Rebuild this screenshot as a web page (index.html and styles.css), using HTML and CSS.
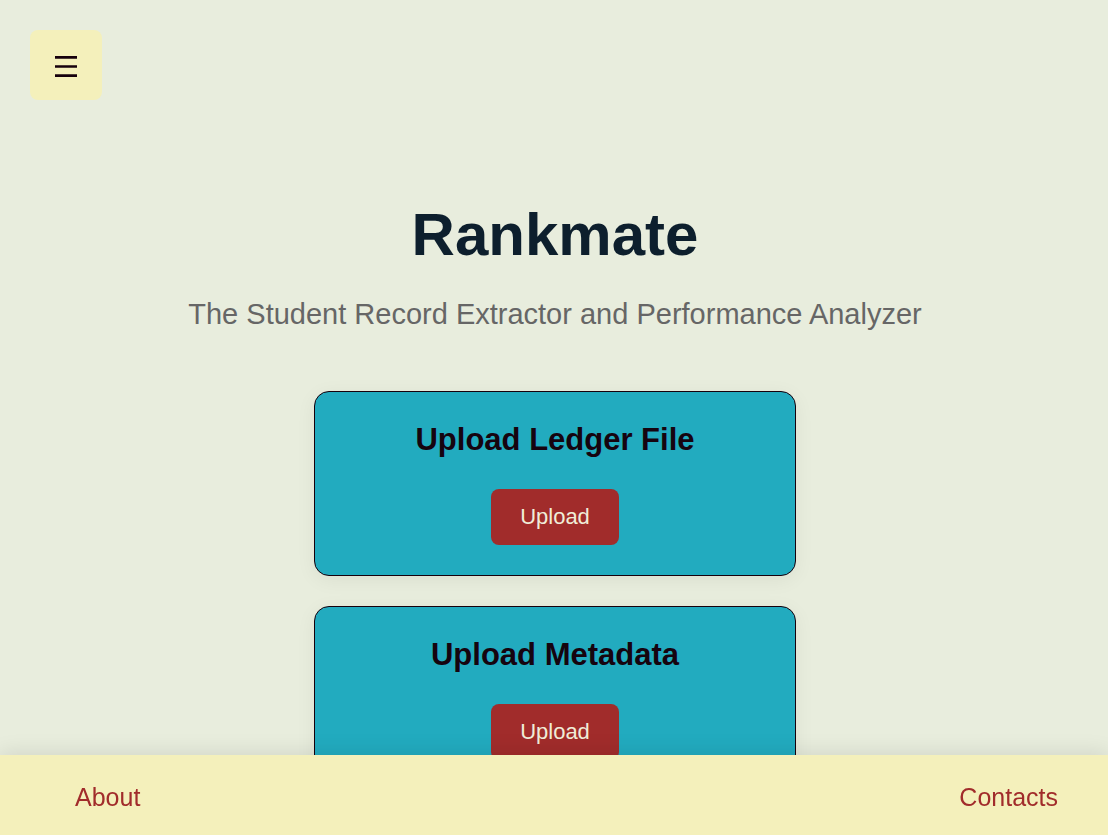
FILE: index.html
```html
<!DOCTYPE html>
<html lang="en">
<head>
<meta charset="utf-8">
<meta name="viewport" content="width=device-width, initial-scale=1">
<title>Rankmate</title>
<link rel="stylesheet" href="styles.css">
</head>
<body>
<header class="topbar">
  <button class="menu-button" type="button" aria-label="Open menu">
    <svg class="menu-icon" viewBox="0 0 24 24" aria-hidden="true">
      <path d="M1 4.4H23M1 13.5H23M1 22.6H23" fill="none" stroke="currentColor" stroke-width="2.6"/>
    </svg>
  </button>
</header>
<main class="content">
  <h1 class="title">Rankmate</h1>
  <p class="subtitle">The Student Record Extractor and Performance Analyzer</p>
  <div class="cards">
    <section class="card">
      <h2 class="card-title">Upload Ledger File</h2>
      <button class="upload-button" type="button">Upload</button>
    </section>
    <section class="card">
      <h2 class="card-title">Upload Metadata</h2>
      <button class="upload-button" type="button">Upload</button>
    </section>
  </div>
</main>
<footer class="footer">
  <a class="footer-link" href="#about">About</a>
  <a class="footer-link" href="#contacts">Contacts</a>
</footer>
</body>
</html>
```

FILE: styles.css
```css
* {
  box-sizing: border-box;
}

html {
  scrollbar-width: none;
}

body {
  margin: 0;
  background: #e8eddd;
  color: #16040f;
  font-family: "Liberation Sans", Arial, sans-serif;
}

.topbar {
  padding: 30px;
}

.menu-button {
  display: flex;
  align-items: center;
  justify-content: center;
  width: 72px;
  height: 70px;
  padding: 0;
  border: 0;
  border-radius: 8px;
  background: #f4f0bb;
  color: #16000c;
  cursor: pointer;
}

.menu-icon {
  width: 24px;
  height: 24px;
}

.content {
  display: flex;
  flex-direction: column;
  align-items: center;
  padding: 70px 18px 110px 20px;
  text-align: center;
}

.title {
  margin: 0;
  color: #0d1f2d;
  font-size: 60px;
  line-height: 70px;
}

.subtitle {
  margin: 26px 0 59px;
  color: #666;
  font-size: 29px;
  line-height: 36px;
}

.cards {
  display: flex;
  flex-direction: column;
  gap: 30px;
  width: 100%;
  max-width: 482px;
}

.card {
  padding: 30px;
  border: 1px solid #16000c;
  border-radius: 15px;
  background: #22abbf;
  box-shadow: 0 4px 20px rgba(0, 0, 0, 0.06);
}

.card-title {
  margin: 0 0 31px;
  font-size: 31px;
  line-height: 36px;
}

.upload-button {
  height: 56px;
  padding: 0 29px;
  border: 0;
  border-radius: 8px;
  background: #a12c2b;
  color: #f0ecd8;
  font-family: inherit;
  font-size: 22px;
  line-height: 26px;
  vertical-align: top;
  cursor: pointer;
}

.footer {
  position: fixed;
  right: 0;
  bottom: 0;
  left: 0;
  display: flex;
  align-items: center;
  justify-content: space-between;
  padding: 27px 50px 23px 75px;
  background: #f4f0bb;
  box-shadow: 0 -2px 20px rgba(0, 0, 0, 0.1);
}

.footer-link {
  color: #a12c2b;
  font-size: 25px;
  line-height: 30px;
  text-decoration: none;
}
```
